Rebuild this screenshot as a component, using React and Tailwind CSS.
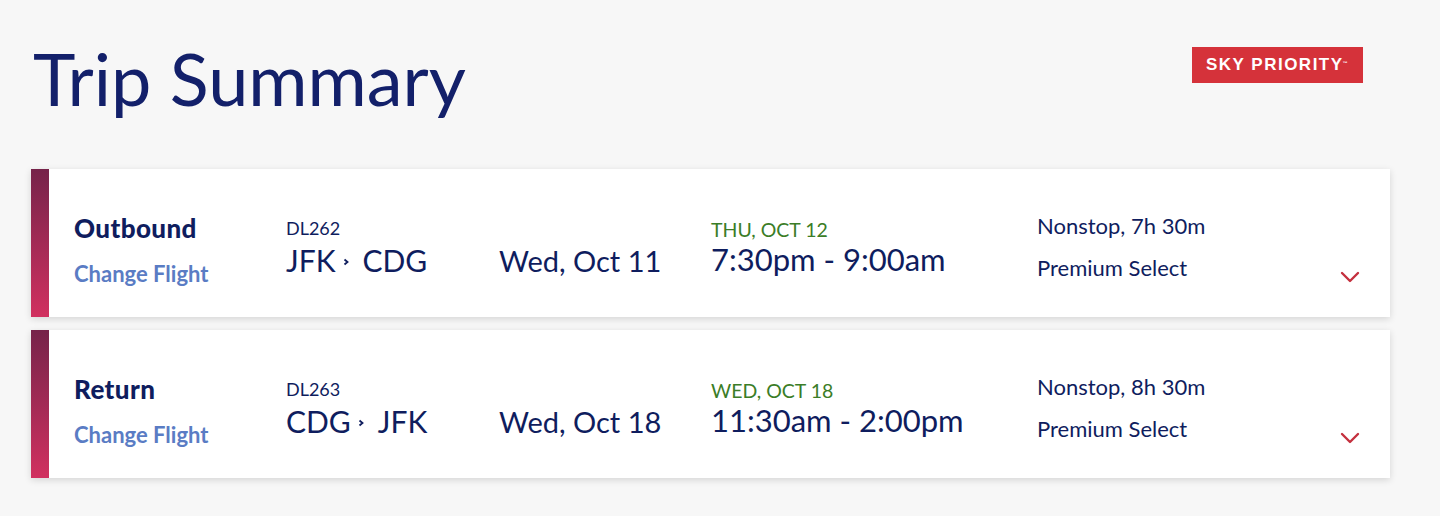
import React from 'react';

const flights = [
  {
    label: 'Outbound',
    code: 'DL262',
    from: 'JFK',
    to: 'CDG',
    date: 'Wed, Oct 11',
    arrival: 'THU, OCT 12',
    time: '7:30pm - 9:00am',
    duration: 'Nonstop, 7h 30m',
    cabin: 'Premium Select',
  },
  {
    label: 'Return',
    code: 'DL263',
    from: 'CDG',
    to: 'JFK',
    date: 'Wed, Oct 18',
    arrival: 'WED, OCT 18',
    time: '11:30am - 2:00pm',
    duration: 'Nonstop, 8h 30m',
    cabin: 'Premium Select',
  },
];

const Chevron = () => (
  <svg width="20" height="12" viewBox="0 0 20 12" fill="none" aria-hidden="true">
    <polyline points="2,2 10,10 18,2" stroke="#c4303e" strokeWidth="2.4" strokeLinecap="round" strokeLinejoin="round" />
  </svg>
);

const RouteArrow = () => (
  <svg width="6" height="8" viewBox="0 0 6 8" className="ml-[7px] mr-[14px] mt-[4px]" aria-hidden="true">
    <polyline points="1.5,1.5 4.5,4 1.5,6.5" fill="none" stroke="#0f1d5e" strokeWidth="1.8" />
  </svg>
);

const FlightCard = ({ f }) => (
  <div className="flex h-[148px] bg-white shadow-[0_2px_7px_rgba(0,0,0,0.14)]">
    <div className="w-[18px] bg-gradient-to-b from-[#76234a] to-[#d1305f]" />
    <div className="flex flex-1 items-start pl-[25px] pt-[46px] text-[#0f1d5e]">
      <div className="w-[212px]">
        <div className="text-[26px] font-black leading-none tracking-[0.4px]">{f.label}</div>
        <div className="mt-[22px] text-[22px] font-bold leading-none text-[#5a7cc4]">Change Flight</div>
      </div>
      <div className="mt-[4px] w-[213px]">
        <div className="text-[18px] leading-none">{f.code}</div>
        <div className="mt-[8px] flex items-center text-[30px] leading-none">
          <span>{f.from}</span>
          <RouteArrow />
          <span>{f.to}</span>
        </div>
      </div>
      <div className="mt-[31px] w-[212px] text-[29px] leading-none">{f.date}</div>
      <div className="mt-[5px] w-[326px]">
        <div className="text-[19.5px] leading-none text-[#3b7d27]">{f.arrival}</div>
        <div className="mt-[4px] text-[31px] leading-none">{f.time}</div>
      </div>
      <div className="mt-[0px] flex-1">
        <div className="text-[22px] leading-none">{f.duration}</div>
        <div className="mt-[20px] text-[22px] leading-none">{f.cabin}</div>
      </div>
      <div className="mr-[30px] mt-[56px]">
        <Chevron />
      </div>
    </div>
  </div>
);

export default function App() {
  return (
    <div className="min-h-screen bg-[#f7f7f7] pl-[31px] pr-[50px] font-['Lato',sans-serif]">
      <div className="flex items-start justify-between">
        <h1 className="mt-[42px] pl-[2px] text-[72px] font-normal leading-none text-[#13206a]">Trip Summary</h1>
        <div className="mr-[27px] mt-[47px] flex h-[36px] w-[171px] items-center justify-center bg-[#d5323a] font-['Liberation_Sans',sans-serif] text-[17px] font-bold tracking-[1.5px] text-white">
          SKY PRIORITY<sup className="-ml-[1px] text-[5px]">™</sup>
        </div>
      </div>
      <div className="mt-[55px] flex flex-col gap-[13px]">
        {flights.map((f) => (
          <FlightCard key={f.code} f={f} />
        ))}
      </div>
    </div>
  );
}
